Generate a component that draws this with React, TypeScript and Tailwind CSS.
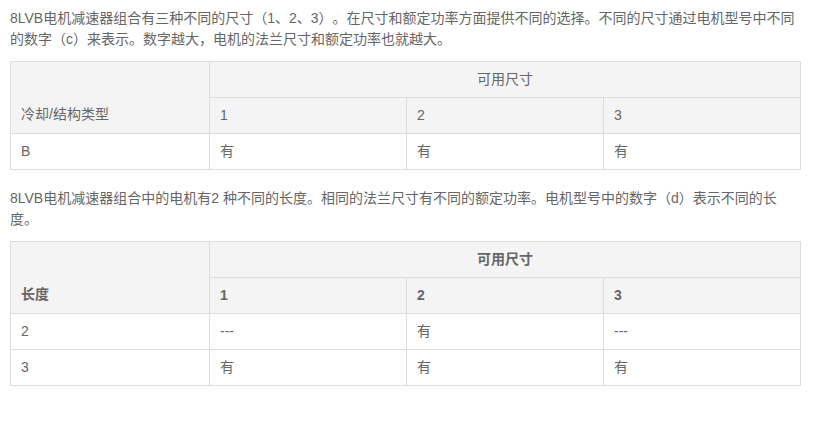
const font = { fontFamily: '"Liberation Sans", "Noto Sans CJK SC", sans-serif' };

type Table = {
  label: string;
  bold: boolean;
  sizes: string[];
  rows: { name: string; cells: string[] }[];
};

const tables: { intro: string; table: Table }[] = [
  {
    intro:
      '8LVB电机减速器组合有三种不同的尺寸（1、2、3）。在尺寸和额定功率方面提供不同的选择。不同的尺寸通过电机型号中不同的数字（c）来表示。数字越大，电机的法兰尺寸和额定功率也就越大。',
    table: {
      label: '冷却/结构类型',
      bold: false,
      sizes: ['1', '2', '3'],
      rows: [{ name: 'B', cells: ['有', '有', '有'] }],
    },
  },
  {
    intro:
      '8LVB电机减速器组合中的电机有2 种不同的长度。相同的法兰尺寸有不同的额定功率。电机型号中的数字（d）表示不同的长度。',
    table: {
      label: '长度',
      bold: true,
      sizes: ['1', '2', '3'],
      rows: [
        { name: '2', cells: ['---', '有', '---'] },
        { name: '3', cells: ['有', '有', '有'] },
      ],
    },
  },
];

function SizeTable({ t }: { t: Table }) {
  const th = `border border-[#dddddd] bg-[#f4f4f4] px-[10px] ${t.bold ? 'font-bold' : 'font-normal'}`;
  return (
    <table className="w-[790px] table-fixed border-collapse text-[14px] text-[#666666]">
      <colgroup>
        <col className="w-[199px]" />
        <col className="w-[197px]" />
        <col className="w-[197px]" />
        <col className="w-[197px]" />
      </colgroup>
      <thead>
        <tr className="h-[36px]">
          <th rowSpan={2} className={`${th} text-left align-bottom pb-[8px]`}>
            {t.label}
          </th>
          <th colSpan={3} className={`${th} text-center`}>
            可用尺寸
          </th>
        </tr>
        <tr className="h-[36px]">
          {t.sizes.map(s => (
            <th key={s} className={`${th} text-left`}>
              {s}
            </th>
          ))}
        </tr>
      </thead>
      <tbody>
        {t.rows.map(r => (
          <tr key={r.name} className="h-[36px]">
            <td className="border border-[#dddddd] px-[10px]">{r.name}</td>
            {r.cells.map((c, i) => (
              <td key={i} className="border border-[#dddddd] px-[10px]">
                {c}
              </td>
            ))}
          </tr>
        ))}
      </tbody>
    </table>
  );
}

export default function App() {
  return (
    <div className="w-[815px] h-[434px] bg-white px-[10px] pt-[8px] [text-spacing-trim:space-all]" style={font}>
      {tables.map((s, i) => (
        <section key={i} className={i > 0 ? 'mt-[18px]' : ''}>
          <p className="w-[790px] text-[14px] leading-[21px] text-[#666666] mb-[11px]">{s.intro}</p>
          <SizeTable t={s.table} />
        </section>
      ))}
    </div>
  );
}
